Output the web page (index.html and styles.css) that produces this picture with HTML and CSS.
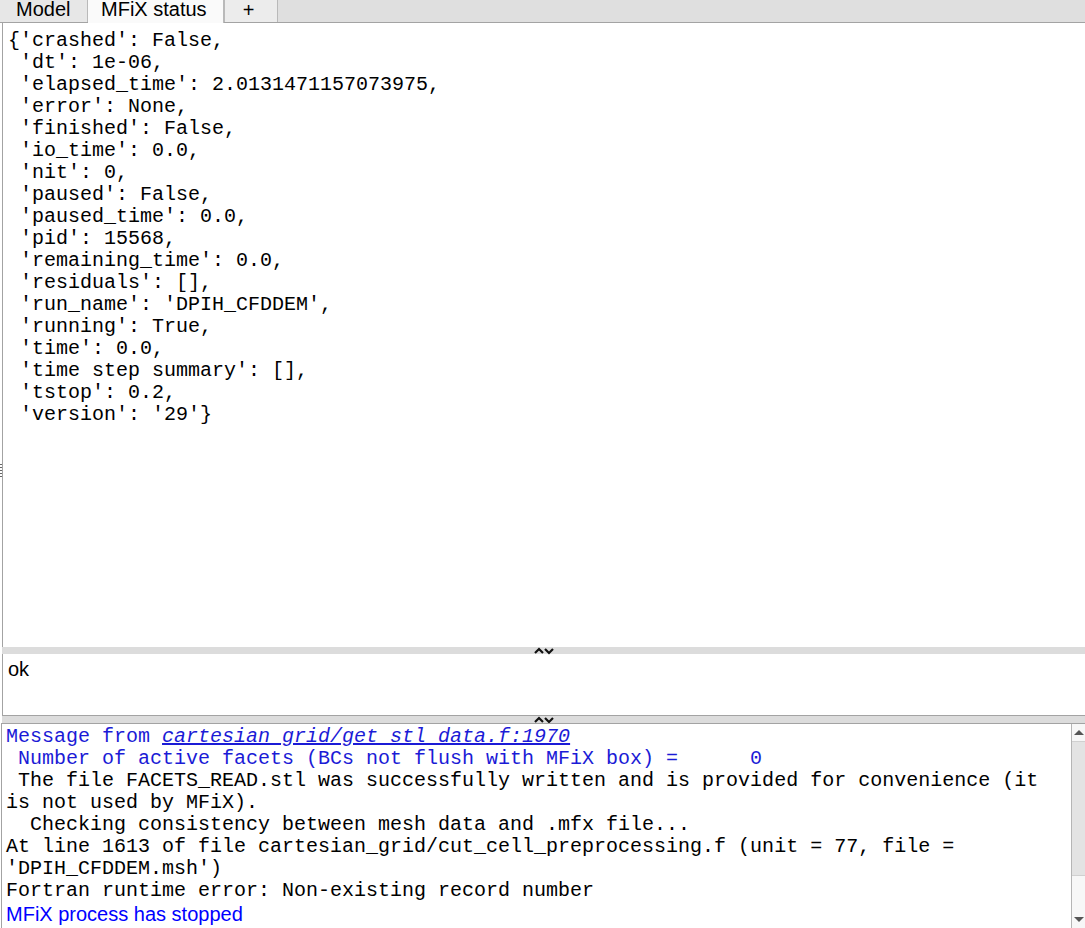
FILE: index.html
```html
<!DOCTYPE html>
<html lang="en">
<head>
  <meta charset="UTF-8" />
  <title>MFiX status</title>
  <link rel="stylesheet" href="styles.css">
</head>
<body>

  <!-- TABS -->
  <div class="tabbar">
    <div class="tab">Model</div>
    <div class="tab selected">MFiX status</div>
    <div class="tab plus">+</div>
  </div>

  <div class="main">
    <span class="grip"></span>

    <!-- STATUS DICT -->
    <pre class="status">{'crashed': False,
 'dt': 1e-06,
 'elapsed_time': 2.0131471157073975,
 'error': None,
 'finished': False,
 'io_time': 0.0,
 'nit': 0,
 'paused': False,
 'paused_time': 0.0,
 'pid': 15568,
 'remaining_time': 0.0,
 'residuals': [],
 'run_name': 'DPIH_CFDDEM',
 'running': True,
 'time': 0.0,
 'time step summary': [],
 'tstop': 0.2,
 'version': '29'}</pre>

    <div class="splitter">
      <svg width="20" height="8" viewBox="0 0 20 8"><polyline points="1,6 5,2 9,6" /><polyline points="11,2 15,6 19,2" /></svg>
    </div>

    <!-- REPLY -->
    <div class="reply">ok</div>

    <div class="splitter">
      <svg width="20" height="8" viewBox="0 0 20 8"><polyline points="1,6 5,2 9,6" /><polyline points="11,2 15,6 19,2" /></svg>
    </div>

    <!-- SOLVER OUTPUT -->
    <div class="log">
      <div class="log-text">
<pre class="info">Message from <a class="src">cartesian_grid/get_stl_data.f:1970</a>
 Number of active facets (BCs not flush with MFiX box) =      0</pre>
<pre> The file FACETS_READ.stl was successfully written and is provided for convenience (it
is not used by MFiX).
  Checking consistency between mesh data and .mfx file...
At line 1613 of file cartesian_grid/cut_cell_preprocessing.f (unit = 77, file =
'DPIH_CFDDEM.msh')
Fortran runtime error: Non-existing record number</pre>
        <div class="stopped">MFiX process has stopped</div>
      </div>
      <div class="scrollbar">
        <div class="sb-btn"><span class="arrow-up"></span></div>
        <div class="sb-thumb"></div>
        <div class="sb-track"></div>
        <div class="sb-btn"><span class="arrow-down"></span></div>
      </div>
    </div>
  </div>

</body>
</html>
```

FILE: styles.css
```css
html, body {
  margin: 0;
  padding: 0;
  background-color: #ffffff;
}

body {
  width: 1085px;
  height: 928px;
  overflow: hidden;
  display: flex;
  flex-direction: column;
  font-family: "Liberation Sans", Arial, sans-serif;
  color: #000;
}

pre {
  margin: 0;
  font-family: "Liberation Mono", "Courier New", monospace;
  font-size: 20px;
  line-height: 22px;
  white-space: pre;
}

/* TABS */
.tabbar {
  display: flex;
  height: 22px;
  background-color: #dfdfdf;
  border-bottom: 1px solid #a3a3a3;
  flex-shrink: 0;
}

.tab {
  height: 22px;
  line-height: 19px;
  font-size: 20px;
  padding: 0 16px;
  background-color: #e7e7e7;
  border-right: 1px solid #b9b9b9;
  box-sizing: border-box;
}

.tab:first-child {
  width: 88px;
}

.tab.selected {
  width: 136px;
  padding-left: 13px;
  background-color: #fafafa;
  height: 23px;
}

.tab.plus {
  width: 54px;
  text-align: center;
  padding: 0 5px 0 0;
  font-size: 20px;
  line-height: 20px;
  background-color: #ececec;
  border-left: 1px solid #b9b9b9;
}

/* MAIN AREA */
.main {
  flex: 1;
  display: flex;
  flex-direction: column;
  margin-left: 2px;
  position: relative;
}

.grip {
  position: absolute;
  left: -2px;
  top: 441px;
  width: 2px;
  height: 14px;
  background: repeating-linear-gradient(#666 0 1px, transparent 1px 3px);
}

.status {
  flex: 1;
  border-left: 1px solid #a3a3a3;
  padding: 7px 5px 3px;
}

.splitter {
  height: 7px;
  background-color: #dcdcdc;
  display: flex;
  justify-content: center;
  overflow: visible;
  flex-shrink: 0;
}

.splitter polyline {
  fill: none;
  stroke: #111;
  stroke-width: 2.2;
}

.reply {
  height: 62px;
  font-size: 20px;
  padding: 4px 5px 0;
  box-sizing: border-box;
  border-left: 1px solid #a3a3a3;
  border-bottom: 1px solid #a3a3a3;
}

/* LOG */
.log {
  height: 205px;
  display: flex;
  border-top: 1px solid #a3a3a3;
  border-left: 1px solid #a3a3a3;
  box-sizing: border-box;
  margin-left: -1px;
}

.log-text {
  flex: 1;
  padding: 2px 4px 0;
  overflow: hidden;
}

.info {
  color: #1b1bd6;
}

.src {
  font-style: italic;
  text-decoration: underline;
}

.stopped {
  color: #0000ff;
  font-size: 20px;
  line-height: 24px;
}

.scrollbar {
  width: 13px;
  display: flex;
  flex-direction: column;
  border-left: 1px solid #b5b5b5;
  background-color: #f7f7f7;
}

.sb-btn {
  height: 17px;
  display: flex;
  align-items: center;
  justify-content: center;
  background-color: #f7f7f7;
}

.sb-thumb {
  height: 133px;
  background-color: #e3e3e3;
  border-top: 1px solid #d0d0d0;
  border-bottom: 1px solid #d0d0d0;
}

.sb-track {
  flex: 1;
}

.arrow-up {
  width: 0;
  height: 0;
  border-left: 5px solid transparent;
  border-right: 5px solid transparent;
  border-bottom: 5px solid #555;
}

.arrow-down {
  width: 0;
  height: 0;
  border-left: 5px solid transparent;
  border-right: 5px solid transparent;
  border-top: 5px solid #555;
}
```
